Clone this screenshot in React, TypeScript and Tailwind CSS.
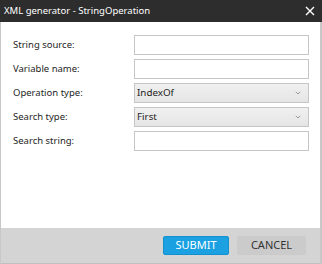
import React from "react";

const fields = [
  { label: "String source:", kind: "input" },
  { label: "Variable name:", kind: "input" },
  { label: "Operation type:", kind: "select", value: "IndexOf" },
  { label: "Search type:", kind: "select", value: "First" },
  { label: "Search string:", kind: "input" },
];

const Chevron = () => (
  <svg width="6" height="4" viewBox="0 0 6 4" className="text-[#9a9a9a]">
    <path d="M0.8 0.8 L3 3 L5.2 0.8" fill="none" stroke="currentColor" strokeWidth="1" />
  </svg>
);

const App = () => {
  return (
    <div
      className="w-[322px] h-[264px] flex flex-col bg-white text-[#1e1e1e]"
      style={{ fontFamily: '"Segoe UI", "Noto Sans", sans-serif' }}
    >
      <div className="h-[22px] bg-[#2d2d2d] flex items-center justify-between pl-[4px] pr-[7px] text-white">
        <span className="text-[9.5px]">XML generator - StringOperation</span>
        <svg width="10" height="10" viewBox="0 0 10 10">
          <path d="M1 1 L9 9 M9 1 L1 9" stroke="white" strokeWidth="1.4" />
        </svg>
      </div>
      <div className="flex-1 flex flex-col border-x border-[#c8c8c8] border-r-2">
        <div className="flex-1 flex flex-col gap-[4px] pt-[13px] pl-[12px] pr-[11px]">
          {fields.map((f) => (
            <div key={f.label} className="flex items-center h-[20px]">
              <span className="w-[121px] text-[9.5px]">{f.label}</span>
              {f.kind === "input" ? (
                <div className="flex-1 h-[20px] border border-[#c6c6c6] bg-white" />
              ) : (
                <div className="flex-1 h-[20px] border border-[#c6c6c6] bg-gradient-to-b from-[#f0f0f0] to-[#e5e5e5] flex items-center justify-between pl-[2px] pr-[7px] text-[9.8px]">
                  <span>{f.value}</span>
                  <Chevron />
                </div>
              )}
            </div>
          ))}
        </div>
        <div className="h-[36px] bg-[#d4d4d4] flex items-start justify-end gap-[8px] pt-[8px] pr-[14px] border-b border-[#c0c0c0]">
          <button className="w-[66px] h-[19px] bg-[#1ba1e2] text-white text-[11px] rounded-[2px] border border-[#1590cf]">
            SUBMIT
          </button>
          <button className="w-[69px] h-[19px] bg-[#cbcbcb] text-[#333] text-[11px] rounded-[2px]">
            CANCEL
          </button>
        </div>
      </div>
    </div>
  );
};

export default App;
